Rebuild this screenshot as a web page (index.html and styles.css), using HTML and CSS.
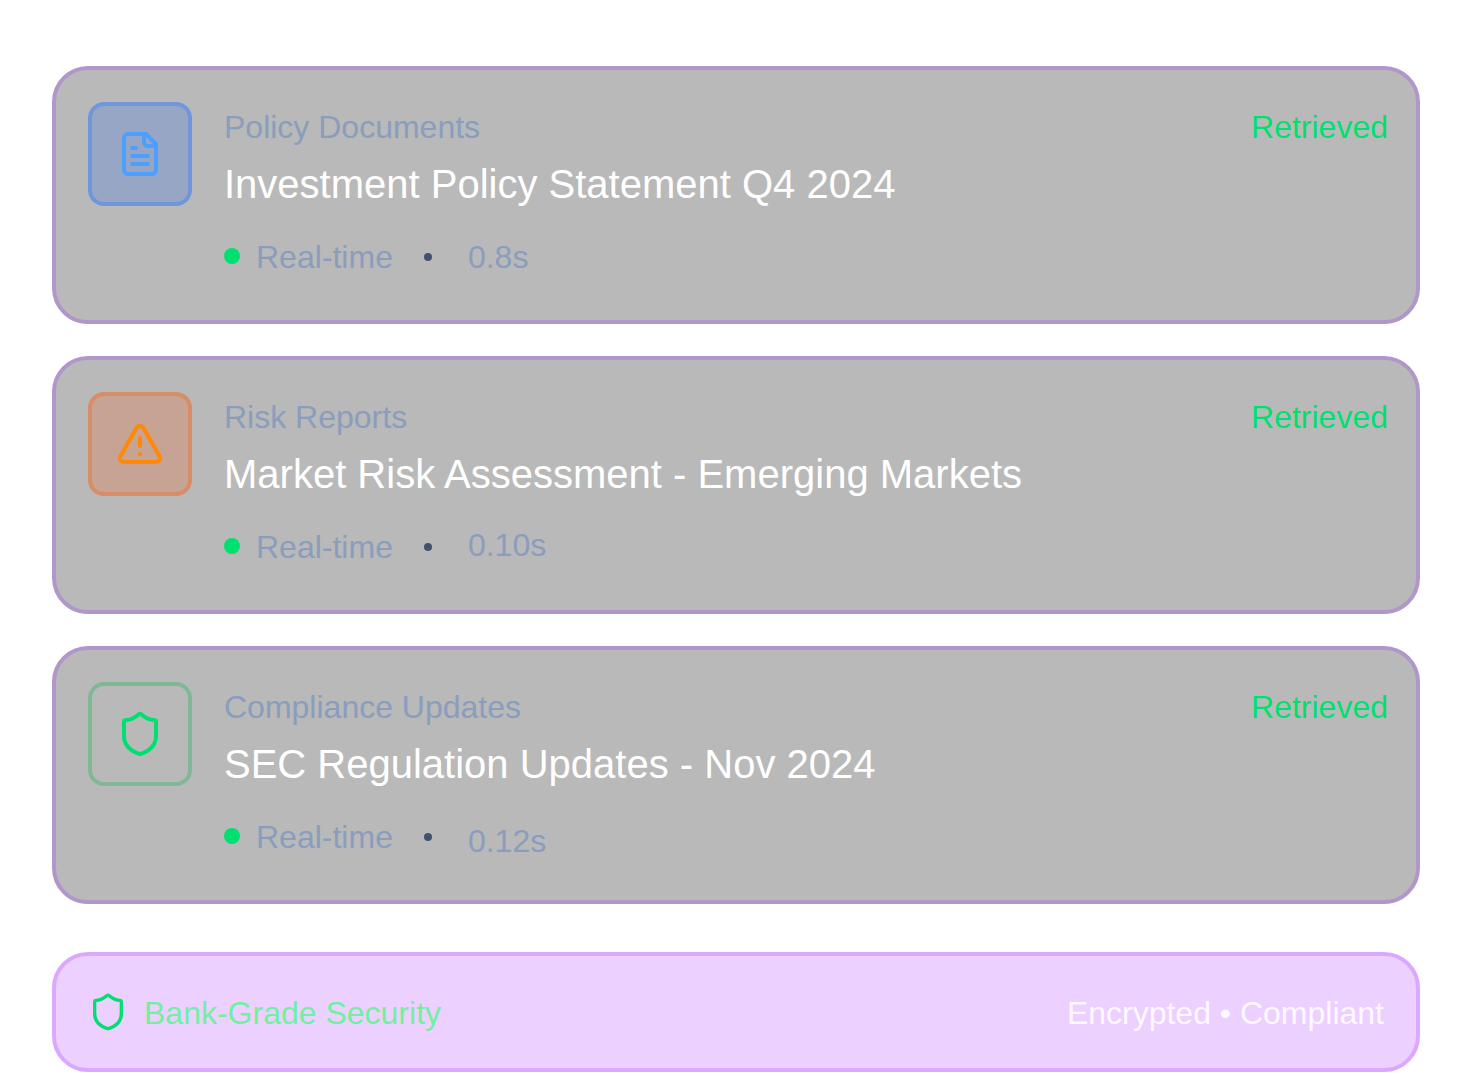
FILE: index.html
```html
<!DOCTYPE html>
<html lang="en">
<head>
  <meta charset="UTF-8">
  <meta name="viewport" content="width=device-width, initial-scale=1.0">
  <title>Retrieved sources</title>
  <link rel="stylesheet" href="styles.css">
</head>
<body>
  <main class="list">

    <div class="card">
      <div class="icon icon-blue">
        <svg viewBox="0 0 24 24" width="48" height="48"><path d="M15 2H6a2 2 0 0 0-2 2v16a2 2 0 0 0 2 2h12a2 2 0 0 0 2-2V7Z"/><path d="M14 2v4a2 2 0 0 0 2 2h4"/><path d="M10 9H8"/><path d="M16 13H8"/><path d="M16 17H8"/></svg>
      </div>
      <div class="info">
        <div class="top">
          <span class="label">Policy Documents</span>
          <span class="status">Retrieved</span>
        </div>
        <div class="title">Investment Policy Statement Q4 2024</div>
        <div class="meta">
          <span class="dot"></span>
          <span class="meta-text">Real-time</span>
          <span class="sep"></span>
          <span class="meta-text">0.8s</span>
        </div>
      </div>
    </div>

    <div class="card">
      <div class="icon icon-orange">
        <svg viewBox="0 0 24 24" width="48" height="48"><path d="m21.73 18-8-14a2 2 0 0 0-3.48 0l-8 14A2 2 0 0 0 4 21h16a2 2 0 0 0 1.73-3Z"/><path d="M12 9v4"/><path d="M12 17h.01"/></svg>
      </div>
      <div class="info">
        <div class="top">
          <span class="label">Risk Reports</span>
          <span class="status">Retrieved</span>
        </div>
        <div class="title">Market Risk Assessment - Emerging Markets</div>
        <div class="meta">
          <span class="dot"></span>
          <span class="meta-text">Real-time</span>
          <span class="sep"></span>
          <span class="meta-text time-up">0.10s</span>
        </div>
      </div>
    </div>

    <div class="card">
      <div class="icon icon-green">
        <svg viewBox="0 0 24 24" width="48" height="48"><path d="M20 13c0 5-3.5 7.5-7.66 8.95a1 1 0 0 1-.67-.01C7.5 20.5 4 18 4 13V6a1 1 0 0 1 1-1c2 0 4.5-1.2 6.24-2.72a1.17 1.17 0 0 1 1.52 0C14.51 3.81 17 5 19 5a1 1 0 0 1 1 1z"/></svg>
      </div>
      <div class="info">
        <div class="top">
          <span class="label">Compliance Updates</span>
          <span class="status">Retrieved</span>
        </div>
        <div class="title">SEC Regulation Updates - Nov 2024</div>
        <div class="meta">
          <span class="dot"></span>
          <span class="meta-text">Real-time</span>
          <span class="sep"></span>
          <span class="meta-text time-down">0.12s</span>
        </div>
      </div>
    </div>

    <div class="footer">
      <div class="secure">
        <svg viewBox="0 0 24 24" width="40" height="40"><path d="M20 13c0 5-3.5 7.5-7.66 8.95a1 1 0 0 1-.67-.01C7.5 20.5 4 18 4 13V6a1 1 0 0 1 1-1c2 0 4.5-1.2 6.24-2.72a1.17 1.17 0 0 1 1.52 0C14.51 3.81 17 5 19 5a1 1 0 0 1 1 1z"/></svg>
        <span class="secure-text">Bank-Grade Security</span>
      </div>
      <span class="note">Encrypted • Compliant</span>
    </div>

  </main>
</body>
</html>
```

FILE: styles.css
```css
html, body {
  margin: 0;
  padding: 0;
  background: #ffffff;
}

body {
  font-family: "Liberation Sans", Arial, sans-serif;
}

.list {
  display: flex;
  flex-direction: column;
  gap: 32px;
  padding: 66px 52px 0;
}

.card {
  display: flex;
  gap: 32px;
  height: 258px;
  box-sizing: border-box;
  padding: 32px 28px 32px 32px;
  background: #b9b9b9;
  border: 4px solid #b197c9;
  border-radius: 36px;
  will-change: opacity;
}

.icon {
  flex: none;
  display: flex;
  align-items: center;
  justify-content: center;
  width: 104px;
  height: 104px;
  box-sizing: border-box;
  border: 4px solid;
  border-radius: 16px;
}

.icon svg, .secure svg {
  fill: none;
  stroke: currentColor;
  stroke-width: 2;
  stroke-linecap: round;
  stroke-linejoin: round;
}

.icon-blue {
  color: #4d9fff;
  background: #97a6c5;
  border-color: #7096dc;
}

.icon-orange {
  color: #ff8904;
  background: #c6a393;
  border-color: #d98c68;
}

.icon-green {
  color: #00e070;
  border-color: #80b896;
}

.info {
  flex: 1;
}

.top {
  display: flex;
  justify-content: space-between;
  font-size: 32px;
  line-height: 50px;
}

.label {
  color: #8a9dbd;
}

.status {
  color: #00e070;
}

.title {
  margin-top: 4px;
  font-size: 40px;
  line-height: 56px;
  color: #ffffff;
}

.meta {
  display: flex;
  align-items: center;
  margin-top: 20px;
  height: 48px;
  font-size: 32px;
}

.dot {
  width: 16px;
  height: 16px;
  margin-right: 16px;
  border-radius: 50%;
  background: #00e070;
}

.meta-text {
  margin-top: 2px;
  color: #8a9dbd;
}

.sep {
  width: 8px;
  height: 8px;
  margin: 2px 36px 0 31px;
  border-radius: 50%;
  background: #42516e;
}

.time-up {
  margin-top: -2px;
}

.time-down {
  margin-top: 10px;
}

.footer {
  display: flex;
  align-items: center;
  justify-content: space-between;
  height: 120px;
  box-sizing: border-box;
  margin-top: 16px;
  padding: 0 32px;
  background: #ecd0ff;
  border: 4px solid #dca8ff;
  border-radius: 36px;
  font-size: 32px;
  will-change: opacity;
}

.secure {
  display: flex;
  align-items: center;
  gap: 16px;
}

.secure svg {
  color: #00e070;
}

.secure-text {
  margin-top: 2px;
  color: #70f0a0;
}

.note {
  margin-top: 2px;
  color: #fdf8ff;
}
```
